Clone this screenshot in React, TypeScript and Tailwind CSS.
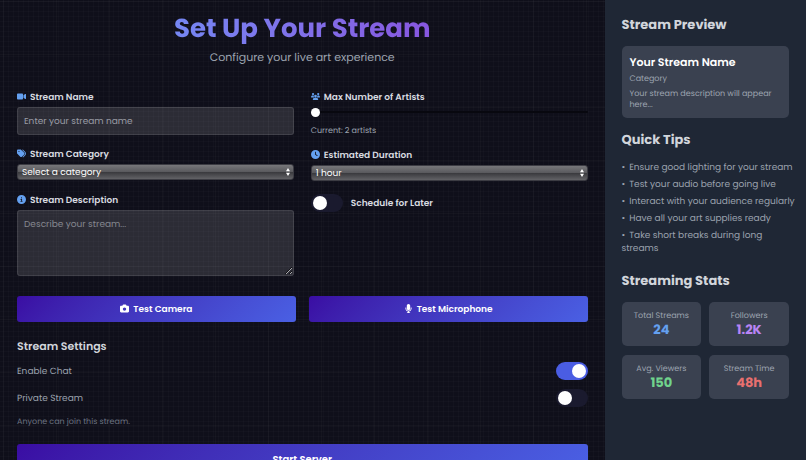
import { useState } from 'react'
import type { ReactNode } from 'react'
import { FaCamera, FaCircleInfo, FaClock, FaMicrophone, FaTags, FaUsers, FaVideo } from 'react-icons/fa6'

const tips = [
  'Ensure good lighting for your stream',
  'Test your audio before going live',
  'Interact with your audience regularly',
  'Have all your art supplies ready',
  'Take short breaks during long streams',
]

const stats = [
  { label: 'Total Streams', value: '24', color: 'text-[#64a0f0]' },
  { label: 'Followers', value: '1.2K', color: 'text-[#b884f5]' },
  { label: 'Avg. Viewers', value: '150', color: 'text-[#70d38c]' },
  { label: 'Stream Time', value: '48h', color: 'text-[#e8706f]' },
]

function FieldLabel({ htmlFor, icon, children }: { htmlFor: string; icon: ReactNode; children: ReactNode }) {
  return (
    <label htmlFor={htmlFor} className="flex h-4 items-center gap-1 text-[9px] leading-4 font-semibold text-[#d8dbe0]">
      <span className="flex pb-[3px] text-[#64a0f0] [&>svg]:h-[9px] [&>svg]:w-auto">{icon}</span>
      {children}
    </label>
  )
}

function Toggle({ id, checked, onChange }: { id: string; checked: boolean; onChange: (v: boolean) => void }) {
  return (
    <input
      id={id}
      type="checkbox"
      role="switch"
      checked={checked}
      onChange={e => onChange(e.target.checked)}
      className="h-[18px] w-8 shrink-0 cursor-pointer appearance-none rounded-full bg-[#1a1a2e] p-[2px] before:block before:size-[14px] before:rounded-full before:bg-white before:content-[''] checked:bg-[#4a5de3] checked:pl-4"
    />
  )
}

function Select({ id, children }: { id: string; children: ReactNode }) {
  return (
    <div className="relative">
      <select
        id={id}
        className="block h-4 w-full appearance-none rounded-[3px] border border-[#3c3c43] bg-[linear-gradient(#77777a,#5a5a5e_48%,#3a3a3e_52%,#626266)] px-1 text-[9px] leading-3 text-white"
      >
        {children}
      </select>
      <svg viewBox="0 0 4 8" className="pointer-events-none absolute top-1 right-1 h-2 w-1 fill-white">
        <path d="M2 0L4 3.2H0zM2 8L0 4.8h4z" />
      </svg>
    </div>
  )
}

export default function App() {
  const [artists, setArtists] = useState(2)
  const [schedule, setSchedule] = useState(false)
  const [chat, setChat] = useState(true)
  const [isPrivate, setIsPrivate] = useState(false)

  return (
    <div className="flex h-screen overflow-hidden bg-[#0f0f1a] font-['Poppins','Inter',sans-serif] text-[#d1d5db] [text-rendering:geometricPrecision]">
      {/* Main */}
      <main className="min-w-0 flex-1 overflow-hidden bg-[linear-gradient(#ffffff06_1px,transparent_1px),linear-gradient(90deg,#ffffff06_1px,transparent_1px),linear-gradient(#ffffff04_1px,transparent_1px),linear-gradient(90deg,#ffffff04_1px,transparent_1px)] bg-size-[53px_53px,53px_53px,5px_5px,5px_5px] bg-position-[3px_1px] px-[17px] pt-[13px]">
        <header className="text-center">
          <h1 className="mx-auto w-fit bg-linear-to-r from-[#7587f3] to-[#8756df] bg-clip-text text-[26px] leading-8 font-bold text-transparent">
            Set Up Your Stream
          </h1>
          <p className="mt-1 text-[11px] leading-4 text-[#9ca3af]">Configure your live art experience</p>
        </header>

        <form onSubmit={e => e.preventDefault()} className="mt-[25px]">
          <div className="grid grid-cols-2 gap-[17px]">
            <div>
              <FieldLabel htmlFor="name" icon={<FaVideo />}>Stream Name</FieldLabel>
              <input
                id="name"
                type="text"
                placeholder="Enter your stream name"
                className="mt-px block h-7 w-full rounded-[3px] border border-white/10 bg-white/12 px-[6px] text-[9px] placeholder:text-[#9a9ca5]"
              />
              <div className="mt-3">
                <FieldLabel htmlFor="category" icon={<FaTags />}>Stream Category</FieldLabel>
                <div className="mt-px">
                  <Select id="category">
                    <option>Select a category</option>
                    <option>Painting</option>
                  </Select>
                </div>
              </div>
              <div className="mt-[13px]">
                <FieldLabel htmlFor="description" icon={<FaCircleInfo />}>Stream Description</FieldLabel>
                <textarea
                  id="description"
                  placeholder="Describe your stream..."
                  className="mt-px block h-[66px] w-full rounded-[3px] border border-white/10 bg-white/12 px-[6px] py-[5px] text-[9px] leading-4 placeholder:text-[#85878f]"
                />
              </div>
            </div>

            <div>
              <FieldLabel htmlFor="artists" icon={<FaUsers />}>Max Number of Artists</FieldLabel>
              <input
                id="artists"
                type="range"
                min={2}
                max={10}
                value={artists}
                onChange={e => setArtists(Number(e.target.value))}
                className="mt-px block h-[10px] w-full appearance-none bg-[linear-gradient(#08080f,#08080f)] bg-size-[100%_2px] bg-center bg-no-repeat [&::-webkit-slider-thumb]:size-[9px] [&::-webkit-slider-thumb]:appearance-none [&::-webkit-slider-thumb]:rounded-full [&::-webkit-slider-thumb]:bg-white"
              />
              <p className="mt-2 text-[8px] leading-3 text-[#9ca3af]">Current: {artists} artists</p>
              <div className="mt-[11px]">
                <FieldLabel htmlFor="duration" icon={<FaClock />}>Estimated Duration</FieldLabel>
                <div className="mt-px">
                  <Select id="duration">
                    <option>1 hour</option>
                    <option>2 hours</option>
                  </Select>
                </div>
              </div>
              <div className="mt-[13px] flex items-center gap-2">
                <Toggle id="schedule" checked={schedule} onChange={setSchedule} />
                <label htmlFor="schedule" className="pt-[2px] text-[9px] leading-4 font-semibold text-[#d8dbe0]">Schedule for Later</label>
              </div>
            </div>
          </div>

          <div className="mt-5 grid grid-cols-2 gap-[13px]">
            <button type="button" className="flex h-[26px] items-center justify-center gap-1 rounded-[3px] bg-linear-135 from-[#3a0ca3] to-[#4a60e4] pt-px text-[9px] font-semibold text-white">
              <span className="flex pb-[2px]"><FaCamera className="h-[9px] w-auto" /></span> Test Camera
            </button>
            <button type="button" className="flex h-[26px] items-center justify-center gap-1 rounded-[3px] bg-linear-135 from-[#3a0ca3] to-[#4a60e4] pt-px text-[9px] font-semibold text-white">
              <span className="flex pb-[2px]"><FaMicrophone className="h-[9px] w-auto" /></span> Test Microphone
            </button>
          </div>

          <section className="mt-4">
            <h2 className="text-[11px] leading-4 font-semibold">Stream Settings</h2>
            <div className="mt-2 flex items-center justify-between">
              <label htmlFor="chat" className="pt-[2px] text-[9px] leading-4 text-[#9ca3af]">Enable Chat</label>
              <Toggle id="chat" checked={chat} onChange={setChat} />
            </div>
            <div className="mt-[9px] flex items-center justify-between">
              <label htmlFor="private" className="pt-[2px] text-[9px] leading-4 text-[#9ca3af]">Private Stream</label>
              <Toggle id="private" checked={isPrivate} onChange={setIsPrivate} />
            </div>
            <p className="mt-[9px] text-[8px] leading-3 text-[#6b7280]">Anyone can join this stream.</p>
          </section>

          <button type="submit" className="mt-4 h-8 w-full rounded-[3px] bg-linear-135 from-[#3a0ca3] to-[#4a60e4] text-[10px] leading-4 font-semibold text-white">
            Start Server
          </button>
        </form>
      </main>

      {/* Sidebar */}
      <aside className="w-1/4 shrink-0 bg-[#1f2735] px-[17px] pt-[17px]">
        <h2 className="text-[13px] leading-4 font-bold">Stream Preview</h2>
        <div className="mt-[13px] rounded-[5px] bg-[#3a4150] p-2">
          <h3 className="text-[11px] leading-4 font-semibold text-white">Your Stream Name</h3>
          <p className="mt-[3px] text-[8px] leading-3 text-[#9ca3af]">Category</p>
          <p className="mt-[3px] text-[8px] leading-[11px] text-[#9ca3af]">Your stream description will appear here...</p>
        </div>

        <h2 className="mt-[14px] text-[13px] leading-4 font-bold">Quick Tips</h2>
        <ul className="mt-[14px] -mr-2 space-y-1 text-[9px] leading-[13px] text-[#9ca3af]">
          {tips.map(tip => (
            <li key={tip} className="before:mr-1 before:content-['•']">{tip}</li>
          ))}
        </ul>

        <h2 className="mt-[17px] text-[13px] leading-4 font-bold">Streaming Stats</h2>
        <div className="mt-[13px] grid grid-cols-2 gap-x-2 gap-y-[9px]">
          {stats.map(s => (
            <div key={s.label} className="rounded-[5px] bg-[#3a4150] py-2 text-center">
              <p className="text-[8px] leading-3 text-[#9ca3af]">{s.label}</p>
              <p className={`text-[13px] leading-4 font-bold ${s.color}`}>{s.value}</p>
            </div>
          ))}
        </div>
      </aside>
    </div>
  )
}
